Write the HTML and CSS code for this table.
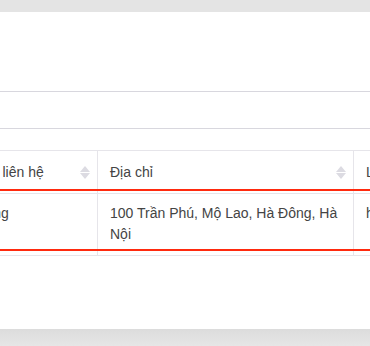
FILE: index.html
```
<!DOCTYPE html>
<html lang="vi">

<head>
    <meta charset="UTF-8">
    <meta name="viewport" content="width=device-width, initial-scale=1.0">
    <title>Danh sách khách hàng</title>
    <link rel="stylesheet" href="styles.css">
</head>

<body>
    <div class="panel">
        <div class="toolbar"></div>
        <div class="filter"></div>
        <div class="table-wrap">
            <table class="grid">
                <colgroup>
                    <col class="col-contact">
                    <col class="col-address">
                    <col class="col-type">
                </colgroup>
                <thead>
                    <tr>
                        <th>
                            <div class="th-inner">
                                <span>Người liên hệ</span>
                                <span class="sorter"><i class="up"></i><i class="down"></i></span>
                            </div>
                        </th>
                        <th>
                            <div class="th-inner">
                                <span>Địa chỉ</span>
                                <span class="sorter"><i class="up"></i><i class="down"></i></span>
                            </div>
                        </th>
                        <th>
                            <div class="th-inner">
                                <span>Loại hình</span>
                            </div>
                        </th>
                    </tr>
                </thead>
                <tbody>
                    <tr class="selected">
                        <td>Lý Long</td>
                        <td>100 Trần Phú, Mộ Lao, Hà Đông, Hà Nội</td>
                        <td>hoạt động</td>
                    </tr>
                </tbody>
            </table>
            <div class="row-outline"></div>
        </div>
    </div>
    <div class="footer"></div>
</body>

</html>
```

FILE: styles.css
```
body {
    margin: 0;
    padding-top: 12px;
    background: #e4e4e4;
    font: 14px/21px "Liberation Sans", Arial, sans-serif;
    color: #444;
    overflow: hidden;
}

.panel {
    background: #fff;
    height: 317px;
    overflow: hidden;
}

.toolbar {
    height: 79px;
    border-bottom: 1px solid #d8d7de;
}

.filter {
    height: 36px;
    border-bottom: 1px solid #d8d7de;
}

.table-wrap {
    position: relative;
    margin-top: 21px;
    overflow: hidden;
}

.grid {
    border-collapse: collapse;
    table-layout: fixed;
    margin-left: -54px;
    width: 561px;
}

.col-contact {
    width: 151px;
}

.col-address {
    width: 256px;
}

.col-type {
    width: 154px;
}

.grid th,
.grid td {
    border: 1px solid #e6e5ea;
    text-align: left;
    font-weight: normal;
}

.grid th {
    height: 42px;
    padding: 0 12px;
    vertical-align: middle;
}

.grid td {
    padding: 9px 12px 10px;
    vertical-align: top;
}

.th-inner {
    display: flex;
    align-items: center;
    justify-content: space-between;
}

.sorter {
    display: flex;
    flex-direction: column;
    gap: 1px;
    margin-right: -5px;
}

.sorter i {
    width: 0;
    height: 0;
    border-left: 5px solid transparent;
    border-right: 5px solid transparent;
}

.sorter .up {
    border-bottom: 6px solid #dcdbe2;
}

.sorter .down {
    border-top: 6px solid #dcdbe2;
}

/* khung đỏ của dòng đang chọn */
.row-outline {
    position: absolute;
    left: -10px;
    right: -10px;
    top: 39px;
    height: 58px;
    border-top: 2px solid #ff2a0e;
    border-bottom: 2px solid #ff2a0e;
    pointer-events: none;
}

.footer {
    height: 17px;
    background: linear-gradient(#dcdcdc, #e6e6e6);
}
```
